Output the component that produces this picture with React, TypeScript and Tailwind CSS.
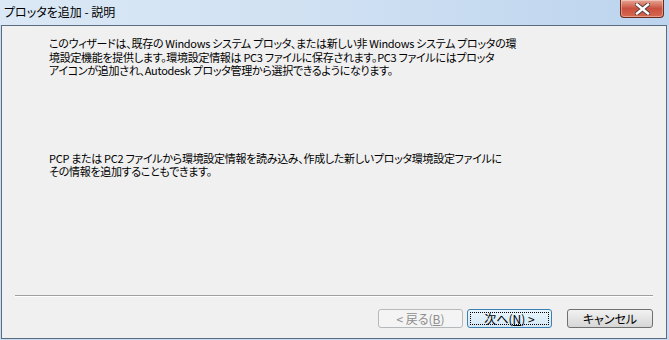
import React from "react";

const jp = "font-['MS_UI_Gothic','Noto_Sans_CJK_JP',sans-serif] [font-feature-settings:'palt']";

function CloseButton() {
  return (
    <div className="mr-[5px] flex h-[18px] w-[44px] items-center justify-center rounded-b-[4px] border border-t-0 border-[#6d2a1f] bg-gradient-to-b from-[#e6a595] via-[#c9503f] to-[#d8684f] shadow-[inset_0_0_0_1px_rgba(255,255,255,0.35)]">
      <svg width="15" height="12" viewBox="0 0 15 12" aria-hidden>
        <path d="M2 1.5 L13 10.5 M13 1.5 L2 10.5" stroke="#4a3a38" strokeWidth="4.2" strokeLinecap="square" />
        <path d="M2 1.5 L13 10.5 M13 1.5 L2 10.5" stroke="#ffffff" strokeWidth="2.4" strokeLinecap="square" />
      </svg>
    </div>
  );
}

export default function App() {
  return (
    <div className={`flex h-[340px] w-[669px] flex-col bg-[#c9dcf1] ${jp}`}>
      {/* Title bar */}
      <div className="flex h-[25px] shrink-0 items-start justify-between bg-gradient-to-r from-[#dbe8f5] via-[#cfe0f2] to-[#bcd4ee]">
        <span className="pl-[4px] pt-[5px] text-[12px] leading-[14px] text-black">プロッタを追加 - 説明</span>
        <CloseButton />
      </div>

      {/* Client area */}
      <div className="ml-[1px] mr-[2px] mb-[1px] flex flex-1 flex-col border border-[#5b6b80] bg-[#f0f0f0]">
        <div className="flex-1 pl-[47px] pt-[11px] text-[11px] leading-[13.5px] tracking-[-0.3px] text-black">
          <p className="whitespace-nowrap">
            このウィザードは、既存の Windows システム プロッタ、または新しい非 Windows システム プロッタの環
            <br />
            境設定機能を提供します。環境設定情報は PC3 ファイルに保存されます。PC3 ファイルにはプロッタ
            <br />
            アイコンが追加され、Autodesk プロッタ管理から選択できるようになります。
          </p>
          <p className="mt-[74px] whitespace-nowrap">
            PCP または PC2 ファイルから環境設定情報を読み込み、作成した新しいプロッタ環境設定ファイルに
            <br />
            その情報を追加することもできます。
          </p>
        </div>

        <div className="mx-[13px] border-t border-b border-t-[#a0a0a0] border-b-white" />

        <div className="flex justify-end gap-[4px] pb-[10px] pr-[13px] pt-[12px] text-[12px]">
          <button className="flex h-[19px] w-[85px] items-center justify-center rounded-[3px] border border-[#b5b9bc] bg-[#f4f4f4] text-[#8d8d8d]">
            &lt; 戻る(<span className="underline">B</span>)
          </button>
          <button className="flex h-[19px] w-[85px] items-center justify-center rounded-[3px] border border-[#3c7fb1] bg-gradient-to-b from-[#eaf6fd] to-[#d4e8f5] p-[2px] text-black">
            <span className="flex h-full w-full items-center justify-center border border-dotted border-black">
              次へ(<span className="underline">N</span>) &gt;
            </span>
          </button>
          <button className="ml-[11px] flex h-[19px] w-[86px] items-center justify-center rounded-[3px] border border-[#707070] bg-gradient-to-b from-[#f2f2f2] to-[#d6d6d6] text-black">
            キャンセル
          </button>
        </div>
      </div>
    </div>
  );
}
